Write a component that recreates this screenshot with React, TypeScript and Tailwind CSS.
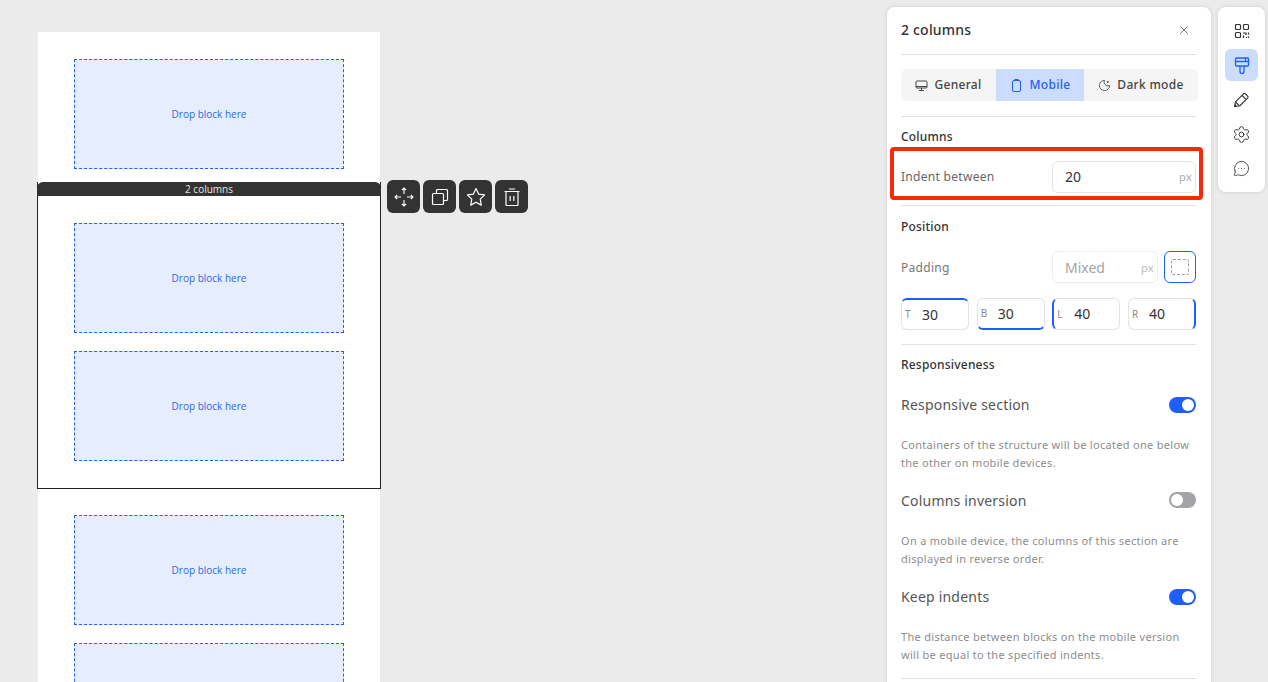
import { X, Settings, MessageCircleMore } from "lucide-react";

function DropZone({ label = "Drop block here" }: { label?: string }) {
  return (
    <div className="h-[110px] w-[270px] shrink-0 mx-auto flex items-center justify-center border border-dashed border-[#1f5eff] bg-[#e6eefe] text-[10px] text-[#2f66e8] font-['Open_Sans',sans-serif]">
      {label}
    </div>
  );
}

function ActionButton({ children }: { children: React.ReactNode }) {
  return (
    <div className="w-[33px] h-[33px] rounded-md bg-[#333333] flex items-center justify-center text-white">
      {children}
    </div>
  );
}

function Toggle({ on }: { on: boolean }) {
  return (
    <div className={`w-[27px] h-4 rounded-full flex items-center px-[2px] ${on ? "bg-[#1f5eff] justify-end" : "bg-[#a3a3a8] justify-start -mt-[2px]"}`}>
      <div className="w-3 h-3 rounded-full bg-white" />
    </div>
  );
}

function SideInput({ label, value, edge }: { label: string; value: string; edge: string }) {
  return (
    <div className={`relative w-[68px] h-8 rounded-md border border-[#e3e3e3] flex items-center ${edge}`}>
      <span className="w-5 pl-[3px] text-[10px] text-[#8a8a8a]">{label}</span>
      <span className="text-sm text-[#333333]">{value}</span>
    </div>
  );
}

function ToggleRow({ title, desc, on, descHeight }: { title: string; desc: string[]; on: boolean; descHeight: string }) {
  return (
    <div>
      <div className="flex items-center justify-between h-5">
        <span className="text-sm tracking-[0.2px] text-[#555555]">{title}</span>
        <Toggle on={on} />
      </div>
      <div className={`${descHeight} text-[11px] tracking-[0.3px] leading-[18px] text-[#8d8d8d]`}>
        {desc.map((d) => (
          <div key={d}>{d}</div>
        ))}
      </div>
    </div>
  );
}

const MonitorIcon = () => (
  <svg width="13" height="13" viewBox="0 0 13 13" fill="none" stroke="currentColor" strokeWidth="1">
    <rect x="1" y="2" width="11" height="7" rx="1" />
    <path d="M1 7.5h11M6.5 9v2M4 11.5h5" />
  </svg>
);

const PhoneIcon = () => (
  <svg width="13" height="13" viewBox="0 0 13 13" fill="none" stroke="currentColor" strokeWidth="1">
    <rect x="2.5" y="1.5" width="8" height="11" rx="1.5" />
    <path d="M4.5 0.5h4" />
  </svg>
);

const MoonIcon = () => (
  <svg width="13" height="13" viewBox="0 0 14 14" fill="none" stroke="#555" strokeWidth="1">
    <path d="M7 1.5a5.5 5.5 0 1 0 5.5 5.5 3.6 3.6 0 0 1-5-1.2A3.6 3.6 0 0 1 7 1.5z" />
    <path d="M10.5 2v2.4M9.3 3.2h2.4" />
  </svg>
);

const MoveIcon = () => (
  <svg width="22" height="22" viewBox="0 0 22 22" fill="none" stroke="currentColor" strokeWidth="1.1">
    <path d="M11 2v6M8.8 4.2 11 2l2.2 2.2M11 14v6M8.8 17.8 11 20l2.2-2.2M2 11h6M4.2 8.8 2 11l2.2 2.2M14 11h6M17.8 8.8 20 11l-2.2 2.2" />
  </svg>
);

const CopyIcon = () => (
  <svg width="18" height="18" viewBox="0 0 18 18" fill="none" stroke="currentColor" strokeWidth="1.2">
    <rect x="1.5" y="5.5" width="11" height="11" rx="1" />
    <path d="M5.5 5.5V2.5a1 1 0 0 1 1-1h9a1 1 0 0 1 1 1v9a1 1 0 0 1-1 1h-3" />
  </svg>
);

const StarIcon = () => (
  <svg width="20" height="20" viewBox="0 0 20 20" fill="none" stroke="currentColor" strokeWidth="1.2" strokeLinejoin="round">
    <path d="M10 1.5l2.6 5.6 6 .8-4.4 4.2 1.1 6L10 15.2l-5.3 2.9 1.1-6L1.4 7.9l6-.8z" />
  </svg>
);

const TrashIcon = () => (
  <svg width="18" height="20" viewBox="0 0 18 20" fill="none" stroke="currentColor" strokeWidth="1.2">
    <path d="M1.5 4.5h15M6 2h6" />
    <rect x="3" y="4.5" width="12" height="14" rx="0.5" />
    <path d="M7.2 9v5M10.8 9v5" />
  </svg>
);

const QrIcon = () => (
  <svg width="16" height="16" viewBox="0 0 16 16" fill="none" stroke="#333" strokeWidth="1.2">
    <rect x="1.5" y="1.5" width="5" height="5" rx="1" />
    <rect x="9.5" y="1.5" width="5" height="5" rx="1" />
    <rect x="1.5" y="9.5" width="5" height="5" rx="1" />
    <path d="M9 10h3v2M14.5 9.5v2M9.5 12.5v2.5M12 14.5h1M14.5 13.5v1.5" />
  </svg>
);

const RollerIcon = () => (
  <svg width="16" height="17" viewBox="0 0 16 17" fill="none" stroke="#1f5eff" strokeWidth="1.3" strokeLinejoin="round">
    <rect x="1.5" y="1" width="13" height="8" rx="1" />
    <path d="M1.5 4.5h13M11.5 1v3.5" />
    <path d="M6 9v5.5a2 2 0 0 0 4 0V9" />
  </svg>
);

const PencilIcon = () => (
  <svg width="17" height="17" viewBox="0 0 17 17" fill="none" stroke="#333" strokeWidth="1.1" strokeLinejoin="round">
    <path d="M1.5 15.5l1-4.6 8.2-8.2a1 1 0 0 1 1.4 0l2.7 2.7a1 1 0 0 1 0 1.4l-8.2 8.2z" />
    <path d="M2.5 10.9l3.6 3.6M9 4.4l3.6 3.6" />
    <path d="M1.8 14l1.2 1.2" strokeWidth="2" />
  </svg>
);

export default function App() {
  return (
    <div className="h-[682px] overflow-hidden bg-[#ebebeb] flex font-['Noto_Sans','Open_Sans',sans-serif]">
      {/* canvas */}
      <div className="w-[342px] ml-[38px] mr-[507px] mt-8 shrink-0">
        <div className="bg-white h-[150px] pt-[27px]">
          <DropZone />
        </div>
        <div className="relative -mx-px h-[307px] bg-white border border-t-0 border-[#222222]">
          <div className="h-[14px] -mx-px -mb-px bg-[#333333] rounded-t-md text-center text-[10px] leading-[14px] text-[#e5e5e5] font-['Open_Sans',sans-serif]">
            2 columns
          </div>
          <div className="pt-[28px] flex flex-col gap-[18px]">
            <DropZone />
            <DropZone />
          </div>
          <div className="absolute left-[349px] -top-[2px] flex gap-[3px]">
            <ActionButton><MoveIcon /></ActionButton>
            <ActionButton><CopyIcon /></ActionButton>
            <ActionButton><StarIcon /></ActionButton>
            <ActionButton><TrashIcon /></ActionButton>
          </div>
        </div>
        <div className="bg-white pt-[26px] flex flex-col gap-[18px] h-[250px]">
          <DropZone />
          {/* its label falls below the fold */}
          <DropZone label="" />
        </div>
      </div>

      {/* settings panel */}
      <div className="relative w-[324px] h-[700px] mt-[7px] shrink-0 rounded-lg bg-white pl-[14px] pr-[15px] shadow-[0_0_4px_rgba(0,0,0,0.12)]">
        <div className="h-[48px] flex items-center justify-between border-b border-[#e2e2e2] pb-[1px]">
          <span className="text-sm font-medium tracking-[0.2px] text-[#333333]">2 columns</span>
          <X size={14} strokeWidth={1.25} className="mr-[5px] text-[#444444]" />
        </div>
        <div className="mt-[14px] h-8 w-[297px] flex rounded-md bg-[#f5f5f5] text-xs font-medium tracking-[0.3px] text-[#444444] overflow-hidden">
          <div className="w-[95px] flex items-center justify-center gap-[6px]"><MonitorIcon />General</div>
          <div className="w-[88px] flex items-center justify-center gap-[7px] bg-[#ccdcfd] text-[#1f5eff]"><PhoneIcon />Mobile</div>
          <div className="flex-1 flex items-center justify-center gap-[6px]"><MoonIcon />Dark mode</div>
        </div>
        <div className="mt-[15px] border-t border-[#e2e2e2] pt-[11px] h-[90px] border-b">
          <div className="text-xs font-medium tracking-[0.2px] text-[#333333] h-[17px] leading-[17px]">Columns</div>
          <div className="mt-4 flex items-center justify-between">
            <span className="text-xs tracking-[0.3px] text-[#666666]">Indent between</span>
            <div className="w-[144px] h-8 rounded-md border border-[#e3e3e3] flex items-center justify-between pl-3 pr-[3px]">
              <span className="text-sm text-[#333333]">20</span>
              <span className="text-[11px] tracking-[0.3px] text-[#aaaaaa]">px</span>
            </div>
          </div>
        </div>
        <div className="absolute left-[3px] top-[140px] w-[313px] h-[53px] border-4 border-[#f52a08] rounded-sm" />

        <div className="pt-[12px] h-[139px] border-b border-[#e2e2e2]">
          <div className="text-xs font-medium tracking-[0.2px] text-[#333333] h-[17px] leading-[17px]">Position</div>
          <div className="mt-[16px] flex items-center">
            <span className="text-xs tracking-[0.3px] text-[#777777] flex-1 pt-[2px]">Padding</span>
            <div className="w-[106px] h-8 rounded-md border border-[#ececec] flex items-center justify-between pl-3 pr-[3px] pt-[2px]">
              <span className="text-sm text-[#a5a5a5]">Mixed</span>
              <span className="text-[11px] tracking-[0.3px] text-[#bbbbbb]">px</span>
            </div>
            <div className="ml-[6px] w-8 h-8 rounded-md border border-[#1f5eff] flex items-center justify-center">
              <div className="w-[18px] h-[16px] rounded-[2px] border border-dashed border-[#9a9a9a]" />
            </div>
          </div>
          <div className="mt-[15px] flex justify-between">
            <SideInput label="T" value="30" edge="border-t-2 border-t-[#1f5eff]" />
            <SideInput label="B" value="30" edge="border-b-2 border-b-[#1f5eff]" />
            <SideInput label="L" value="40" edge="border-l-2 border-l-[#1f5eff]" />
            <SideInput label="R" value="40" edge="border-r-2 border-r-[#1f5eff]" />
          </div>
        </div>

        <div className="pt-[11px]">
          <div className="text-xs font-medium tracking-[0.2px] text-[#333333] h-[17px] leading-[17px]">Responsiveness</div>
          <div className="mt-[22px]">
            <ToggleRow
              on
              title="Responsive section"
              descHeight="h-[76px] pt-[21px]"
              desc={["Containers of the structure will be located one below", "the other on mobile devices."]}
            />
            <ToggleRow
              on={false}
              title="Columns inversion"
              descHeight="h-[76px] pt-[21px]"
              desc={["On a mobile device, the columns of this section are", "displayed in reverse order."]}
            />
            <ToggleRow
              on
              title="Keep indents"
              descHeight="h-[72px] pt-[21px] border-b border-[#e2e2e2]"
              desc={["The distance between blocks on the mobile version", "will be equal to the specified indents."]}
            />
          </div>
        </div>
      </div>

      {/* tool rail */}
      <div className="ml-[7px] mt-[7px] w-[47px] h-[185px] shrink-0 rounded-lg bg-white shadow-[0_0_4px_rgba(0,0,0,0.12)] flex flex-col items-center pt-[7px] gap-[2px] text-[#333333]">
        <div className="w-[33px] h-[33px] flex items-center justify-center"><QrIcon /></div>
        <div className="w-[33px] h-[32px] rounded-md bg-[#ccdcfd] flex items-center justify-center"><RollerIcon /></div>
        <div className="w-[33px] h-[33px] flex items-center justify-center"><PencilIcon /></div>
        <div className="w-[33px] h-[33px] flex items-center justify-center"><Settings size={19} strokeWidth={1.2} /></div>
        <div className="w-[33px] h-[33px] -mt-px flex items-center justify-center"><MessageCircleMore size={17} strokeWidth={1.2} /></div>
      </div>
    </div>
  );
}
